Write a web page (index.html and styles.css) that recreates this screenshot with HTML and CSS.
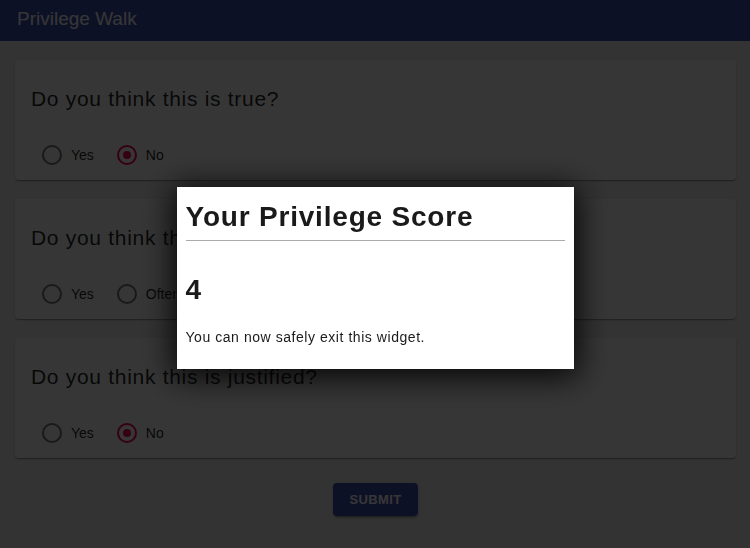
FILE: index.html
```html
<!DOCTYPE html>
<html lang="en">
<head>
<meta charset="utf-8">
<title>Privilege Walk</title>
<link rel="stylesheet" href="styles.css">
</head>
<body>
<header class="appbar">
  <h1 class="appbar-title">Privilege Walk</h1>
</header>
<main class="content">
  <section class="card">
    <h2 class="question">Do you think this is true?</h2>
    <div class="options">
      <label class="option"><svg class="radio" viewBox="0 0 24 24"><circle cx="12" cy="12" r="9" fill="none" stroke="currentColor" stroke-width="2"/></svg><span>Yes</span></label>
      <label class="option"><svg class="radio checked" viewBox="0 0 24 24"><circle cx="12" cy="12" r="9" fill="none" stroke="currentColor" stroke-width="2"/><circle cx="12" cy="12" r="4" fill="currentColor"/></svg><span>No</span></label>
    </div>
  </section>
  <section class="card">
    <h2 class="question">Do you think this happens often?</h2>
    <div class="options">
      <label class="option"><svg class="radio" viewBox="0 0 24 24"><circle cx="12" cy="12" r="9" fill="none" stroke="currentColor" stroke-width="2"/></svg><span>Yes</span></label>
      <label class="option"><svg class="radio" viewBox="0 0 24 24"><circle cx="12" cy="12" r="9" fill="none" stroke="currentColor" stroke-width="2"/></svg><span>Often</span></label>
    </div>
  </section>
  <section class="card">
    <h2 class="question">Do you think this is justified?</h2>
    <div class="options">
      <label class="option"><svg class="radio" viewBox="0 0 24 24"><circle cx="12" cy="12" r="9" fill="none" stroke="currentColor" stroke-width="2"/></svg><span>Yes</span></label>
      <label class="option"><svg class="radio checked" viewBox="0 0 24 24"><circle cx="12" cy="12" r="9" fill="none" stroke="currentColor" stroke-width="2"/><circle cx="12" cy="12" r="4" fill="currentColor"/></svg><span>No</span></label>
    </div>
  </section>
  <div class="actions">
    <button class="submit" type="button">Submit</button>
  </div>
</main>
<div class="overlay">
  <div class="dialog">
    <h2 class="dialog-title">Your Privilege Score</h2>
    <hr class="dialog-rule">
    <p class="score">4</p>
    <p class="dialog-text">You can now safely exit this widget.</p>
  </div>
</div>
</body>
</html>
```
FILE: styles.css
```css
html, body {
  margin: 0;
  height: 548px;
  overflow: hidden;
}
body {
  background: #f0f0f0;
  font-family: "Liberation Sans", Arial, Helvetica, sans-serif;
}
.appbar {
  height: 41px;
  box-sizing: border-box;
  background: #3f51b5;
  color: #fff;
  padding: 8px 16px 0 17px;
}
.appbar-title {
  margin: 0;
  font-size: 19px;
  font-weight: 400;
  line-height: 22px;
}
.content {
  display: flex;
  flex-direction: column;
  gap: 19px;
  padding: 19px 14px 0 15px;
}
.card {
  background: #fff;
  border-radius: 4px;
  height: 120px;
  box-sizing: border-box;
  padding: 27px 16px 13px;
  box-shadow: 0 2px 1px -1px rgba(0,0,0,.2), 0 1px 1px 0 rgba(0,0,0,.14), 0 1px 3px 0 rgba(0,0,0,.12);
}
.question {
  margin: 0 0 32px;
  font-size: 21px;
  font-weight: 400;
  line-height: 24px;
  letter-spacing: 0.7px;
  color: rgba(0,0,0,.87);
  white-space: nowrap;
}
.options {
  display: flex;
  gap: 21px;
  padding-left: 9px;
}
.option {
  display: flex;
  align-items: center;
  height: 24px;
  font-size: 14px;
  color: rgba(0,0,0,.87);
}
.radio {
  width: 24px;
  height: 24px;
  margin-right: 7px;
  color: rgba(0,0,0,.54);
}
.radio.checked {
  color: #f50057;
}
.actions {
  display: flex;
  justify-content: center;
  margin-top: 6px;
}
.submit {
  background: #3f51b5;
  color: #fff;
  border: 0;
  border-radius: 4px;
  height: 33px;
  padding: 0 16px;
  font-family: inherit;
  font-size: 13px;
  font-weight: 700;
  letter-spacing: 0.4px;
  text-transform: uppercase;
  box-shadow: 0 3px 1px -2px rgba(0,0,0,.2), 0 2px 2px 0 rgba(0,0,0,.14), 0 1px 5px 0 rgba(0,0,0,.12);
}
.overlay {
  position: fixed;
  top: 0;
  left: 0;
  width: 750px;
  height: 548px;
  background-color: rgba(0,0,0,0.79);
  display: flex;
  justify-content: center;
  align-items: flex-start;
  padding-top: 187px;
  box-sizing: border-box;
}
.dialog {
  width: 397px;
  box-sizing: border-box;
  background: #fff;
  padding: 14px 9px 23px;
  color: #1a1a1a;
  box-shadow: 0 4px 30px 4px rgba(0,0,0,.9);
}
.dialog-title {
  margin: 0;
  font-size: 28px;
  font-weight: 700;
  line-height: 32px;
  letter-spacing: 0.8px;
}
.dialog-rule {
  margin: 7px 0 0;
  border: 0;
  border-top: 1px solid #aaa;
  height: 0;
}
.score {
  margin: 33px 0 0;
  font-size: 28px;
  font-weight: 700;
  line-height: 32px;
}
.dialog-text {
  margin: 23px 0 0;
  font-size: 14px;
  line-height: 17px;
  letter-spacing: 0.55px;
}
```
